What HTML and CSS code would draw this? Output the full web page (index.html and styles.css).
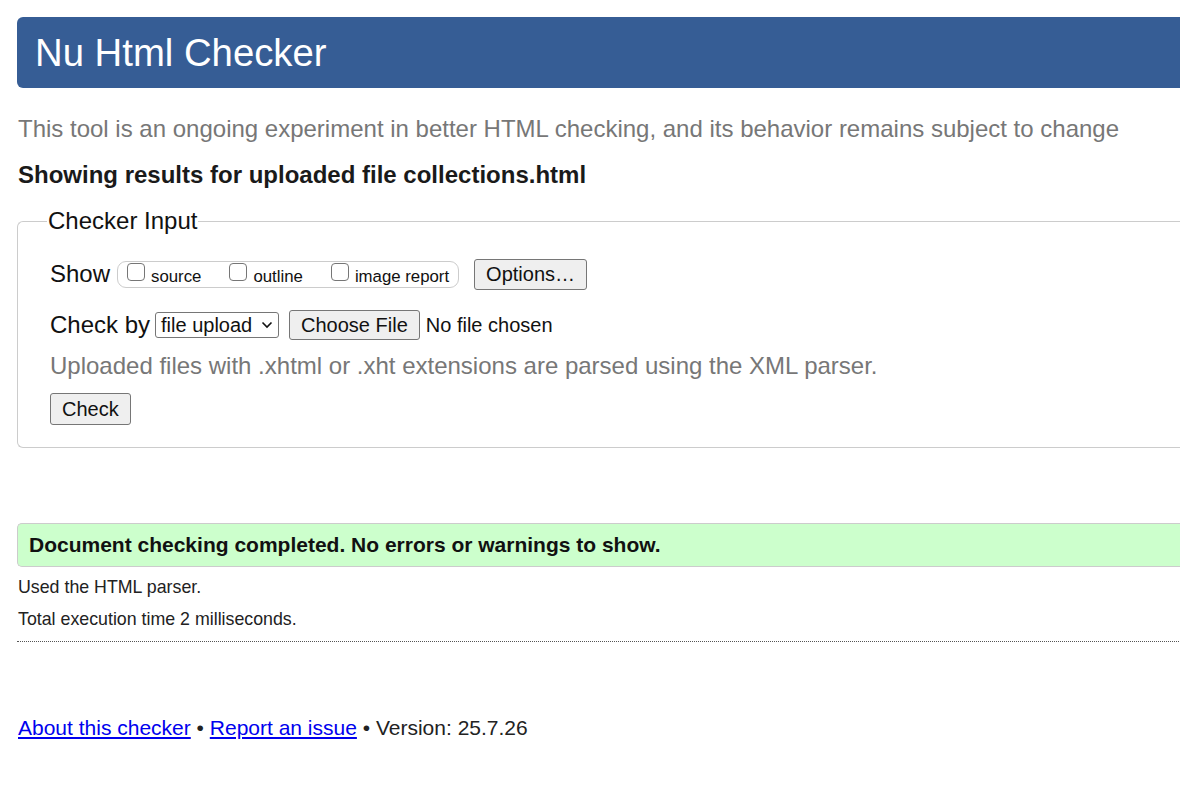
FILE: index.html
```html
<!DOCTYPE html>
<html lang="en">
<head>
<meta charset="utf-8">
<title>Showing results for uploaded file collections.html - Nu Html Checker</title>
<link rel="stylesheet" href="styles.css">
</head>
<body>
<div class="page">
  <h1 class="masthead">Nu Html Checker</h1>
  <p class="intro">This tool is an ongoing experiment in better HTML checking, and its behavior remains subject to change</p>
  <h2 class="results-title">Showing results for uploaded file collections.html</h2>
  <form class="checker-form">
    <fieldset class="checker-input">
      <legend class="checker-legend">Checker Input</legend>
      <div class="row row-show">
        <span class="row-label label-show">Show</span>
        <span class="show-group">
          <label class="show-opt"><input type="checkbox" class="cb"><span>source</span></label>
          <label class="show-opt"><input type="checkbox" class="cb"><span>outline</span></label>
          <label class="show-opt"><input type="checkbox" class="cb"><span>image report</span></label>
        </span>
        <button type="button" class="btn btn-options">Options…</button>
      </div>
      <div class="row row-checkby">
        <span class="row-label label-checkby">Check by</span>
        <span class="select-box"><span class="select-text">file upload</span><svg class="chev" width="12" height="8" viewBox="0 0 12 8"><path d="M1.5 1.5 L6 6 L10.5 1.5" fill="none" stroke="#111" stroke-width="1.6"/></svg></span>
        <button type="button" class="btn btn-file">Choose File</button>
        <span class="file-status">No file chosen</span>
      </div>
      <p class="hint">Uploaded files with .xhtml or .xht extensions are parsed using the XML parser.</p>
      <div class="row row-submit">
        <button type="button" class="btn btn-check">Check</button>
      </div>
    </fieldset>
  </form>
  <div class="success">Document checking completed. No errors or warnings to show.</div>
  <p class="details">Used the HTML parser.</p>
  <p class="details">Total execution time 2 milliseconds.</p>
  <hr class="dotted">
  <p class="footer"><a href="#" class="flink">About this checker</a> • <a href="#" class="flink">Report an issue</a> • Version: 25.7.26</p>
</div>
</body>
</html>
```
FILE: styles.css
```css
html {
  overflow: hidden;
}
body {
  margin: 0;
  background: #fff;
  font-family: "Liberation Sans", Arial, sans-serif;
  color: #111;
}
.page {
  width: 1300px;
  padding: 17px 0 0 17px;
}
.masthead {
  margin: 0;
  height: 71px;
  box-sizing: border-box;
  padding: 0 0 0 18px;
  background: #365d95;
  color: #fff;
  border-radius: 6px 0 0 6px;
  font-weight: normal;
  font-size: 38.3px;
  line-height: 71px;
}
.intro {
  margin: 26px 0 0 1px;
  font-size: 24px;
  line-height: 30px;
  color: #777;
}
.results-title {
  margin: 16px 0 0 1px;
  font-size: 24px;
  line-height: 30px;
  font-weight: bold;
  color: #1a1a1a;
}
.checker-form {
  margin: 17px 0 0;
}
.checker-input {
  margin: 0;
  padding: 21px 0 22px 32px;
  border: 1px solid #ccc;
  border-right: none;
  border-radius: 6px 0 0 6px;
}
.checker-legend {
  padding: 0 1px;
  margin-left: -3px;
  font-size: 24px;
  line-height: 28px;
  color: #111;
}
.row {
  display: flex;
  align-items: center;
}
.row-label {
  font-size: 24px;
  line-height: 30px;
}
.label-show {
  margin-right: 7px;
}
.label-checkby {
  margin-right: 5px;
  line-height: 32px;
}
.row-show {
  height: 36px;
}
.show-group {
  display: inline-flex;
  align-items: flex-start;
  height: 27px;
  box-sizing: border-box;
  border: 1px solid #ccc;
  border-radius: 9px;
  padding: 0 9px 0 9px;
  margin-right: 15px;
  gap: 28px;
}
.show-opt {
  display: inline-flex;
  align-items: flex-start;
  font-size: 16.8px;
  color: #111;
}
.show-opt span {
  line-height: 20px;
  padding-top: 5px;
}
.cb {
  appearance: none;
  -webkit-appearance: none;
  box-sizing: border-box;
  flex: none;
  width: 18px;
  height: 18px;
  margin: 1px 6px 0 0;
  border: 1px solid #767676;
  border-radius: 4px;
  background: #fff;
}
.btn {
  font-family: "Liberation Sans", Arial, sans-serif;
  font-size: 20px;
  color: #111;
  background: #efefef;
  border: 1px solid #767676;
  border-radius: 3px;
  padding: 0 11px;
  line-height: 29px;
}
.btn-options {
  height: 31px;
  padding: 0 11px;
}
.row-checkby {
  margin-top: 17px;
  height: 32px;
}
.select-box {
  display: inline-flex;
  align-items: center;
  justify-content: space-between;
  width: 124px;
  height: 26px;
  box-sizing: border-box;
  border: 1px solid #767676;
  border-radius: 3px;
  padding: 0 5px 0 5px;
  font-size: 20px;
  margin-right: 10px;
}
.select-text {
  line-height: 24px;
}
.btn-file {
  height: 30px;
  margin-right: 6px;
}
.file-status {
  font-size: 20px;
}
.hint {
  margin: 10px 0 0;
  font-size: 24px;
  line-height: 30px;
  color: #777;
}
.row-submit {
  margin-top: 12px;
}
.btn-check {
  height: 32px;
}
.success {
  margin-top: 75px;
  height: 44px;
  box-sizing: border-box;
  border: 1px solid #ccc;
  border-right: none;
  border-radius: 5px 0 0 5px;
  background: #ccffcc;
  padding-left: 11px;
  font-size: 21px;
  font-weight: bold;
  line-height: 42px;
  color: #111;
}
.details {
  margin: 8px 0 0 1px;
  font-size: 17.8px;
  line-height: 24px;
  color: #222;
}
.dotted {
  margin: 10px 0 0;
  border: none;
  border-top: 1px dotted #555;
  height: 0;
}
.footer {
  margin: 72px 0 0 1px;
  font-size: 21px;
  line-height: 28px;
  color: #222;
}
.flink {
  color: #0000ee;
}
```
